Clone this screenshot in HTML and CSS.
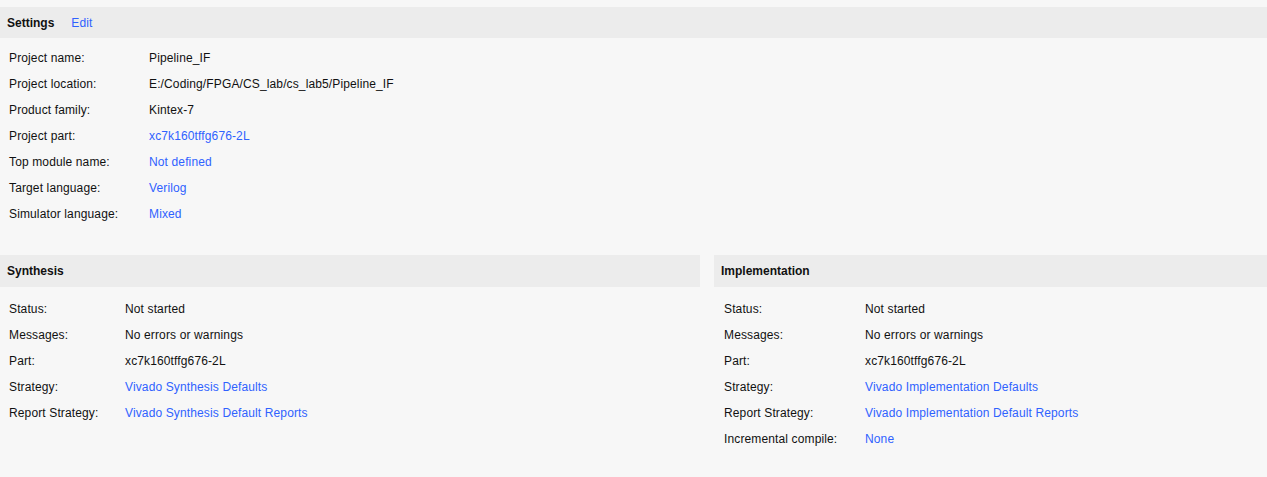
FILE: index.html
```html
<!DOCTYPE html>
<html>
<head>
<meta charset="utf-8">
<link rel="stylesheet" href="styles.css">
</head>
<body>
<div class="page">
  <section class="settings">
    <div class="head">
      <span class="title">Settings</span>
      <span class="link edit">Edit</span>
    </div>
    <div class="rows settings-rows">
      <div class="label">Project name:</div><div class="value">Pipeline_IF</div>
      <div class="label">Project location:</div><div class="value">E:/Coding/FPGA/CS_lab/cs_lab5/Pipeline_IF</div>
      <div class="label">Product family:</div><div class="value">Kintex-7</div>
      <div class="label">Project part:</div><div class="value link">xc7k160tffg676-2L</div>
      <div class="label">Top module name:</div><div class="value link">Not defined</div>
      <div class="label">Target language:</div><div class="value link">Verilog</div>
      <div class="label">Simulator language:</div><div class="value link">Mixed</div>
    </div>
  </section>
  <div class="panels">
    <section class="panel synth">
      <div class="head head-tall"><span class="title">Synthesis</span></div>
      <div class="rows synth-rows">
        <div class="label">Status:</div><div class="value">Not started</div>
        <div class="label">Messages:</div><div class="value">No errors or warnings</div>
        <div class="label">Part:</div><div class="value">xc7k160tffg676-2L</div>
        <div class="label">Strategy:</div><div class="value link">Vivado Synthesis Defaults</div>
        <div class="label">Report Strategy:</div><div class="value link">Vivado Synthesis Default Reports</div>
      </div>
    </section>
    <section class="panel impl">
      <div class="head head-tall"><span class="title">Implementation</span></div>
      <div class="rows impl-rows">
        <div class="label">Status:</div><div class="value">Not started</div>
        <div class="label">Messages:</div><div class="value">No errors or warnings</div>
        <div class="label">Part:</div><div class="value">xc7k160tffg676-2L</div>
        <div class="label">Strategy:</div><div class="value link">Vivado Implementation Defaults</div>
        <div class="label">Report Strategy:</div><div class="value link">Vivado Implementation Default Reports</div>
        <div class="label">Incremental compile:</div><div class="value link">None</div>
      </div>
    </section>
  </div>
</div>
</body>
</html>
```
FILE: styles.css
```css
html, body {
  margin: 0;
  padding: 0;
  background: #f7f7f7;
}
body {
  font-family: "Liberation Sans", Arial, sans-serif;
  font-size: 12px;
  color: #111;
  width: 1267px;
  height: 477px;
  overflow: hidden;
}
.page {
  padding-top: 7px;
}
.head {
  height: 31px;
  background: #ececec;
  display: flex;
  align-items: center;
  padding-left: 7px;
}
.head-tall {
  height: 32px;
}
.title {
  font-weight: bold;
  color: #111;
}
.edit {
  margin-left: 17px;
  letter-spacing: 0.13px;
}
.link {
  color: #2f62ff;
}
.rows {
  display: grid;
  grid-auto-rows: 26px;
  align-items: center;
  letter-spacing: 0.13px;
}
.settings-rows {
  grid-template-columns: 140px 1fr;
  padding: 7px 0 0 9px;
}
.panels {
  display: flex;
  gap: 14px;
  margin-top: 28px;
}
.synth {
  width: 700px;
}
.impl {
  flex: 1;
}
.synth-rows {
  grid-template-columns: 116px 1fr;
  padding: 9px 0 0 9px;
}
.impl-rows {
  grid-template-columns: 141px 1fr;
  padding: 9px 0 0 10px;
}
```
